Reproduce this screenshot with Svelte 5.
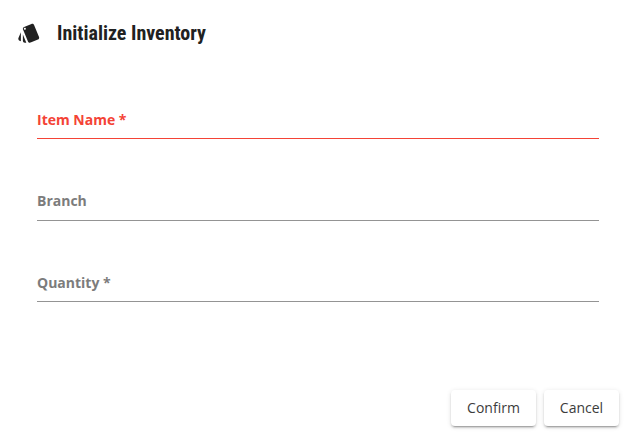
<script>
  const fields = [
    { id: 'item', label: 'Item Name *', invalid: true },
    { id: 'branch', label: 'Branch', invalid: false },
    { id: 'quantity', label: 'Quantity *', invalid: false }
  ];
</script>

<main class="dialog">
  <header>
    <svg class="icon" viewBox="0 0 24 24" aria-hidden="true">
      <path d="M2.53 19.65l1.34.56v-9.03l-2.43 5.86c-.41 1.02.08 2.19 1.09 2.61zm19.5-3.7L17.07 3.98c-.31-.75-1.04-1.21-1.81-1.23-.26 0-.53.04-.79.15L7.1 5.95c-.75.31-1.21 1.03-1.23 1.8-.01.27.04.54.15.8l4.96 11.97c.31.76 1.05 1.22 1.83 1.23.26 0 .52-.05.77-.15l7.36-3.05c1.02-.42 1.51-1.59 1.09-2.6zM7.88 8.75c-.55 0-1-.45-1-1s.45-1 1-1 1 .45 1 1-.45 1-1 1zm-2 11c0 1.1.9 2 2 2h1.45l-3.45-8.34v6.34z" />
    </svg>
    <h1>Initialize Inventory</h1>
  </header>
  <form>
    {#each fields as field (field.id)}
      <div class="field" class:invalid={field.invalid}>
        <span>{field.label}</span>
      </div>
    {/each}
  </form>
  <footer>
    <button class="confirm" type="button">Confirm</button>
    <button class="cancel" type="button">Cancel</button>
  </footer>
</main>

<style>
  :global(body) { background: #fff; }
  .dialog {
    box-sizing: border-box;
    height: 433px;
    padding: 20px 17px 7px;
    display: flex;
    flex-direction: column;
    overflow: hidden;
  }
  header {
    display: flex;
    align-items: center;
    height: 26px;
    color: #212121;
  }
  .icon { width: 24px; height: 24px; fill: currentColor; }
  h1 {
    margin: 0 0 0 16px;
    font: 700 20px/26px "Roboto Condensed", Roboto, sans-serif;
    font-stretch: 75%;
    white-space: nowrap;
  }
  form {
    display: flex;
    flex-direction: column;
    padding: 61px 20px 0;
  }
  .field {
    box-sizing: border-box;
    height: 32px;
    padding-top: 0.5px;
    margin-bottom: 49.5px;
    border-bottom: 1px solid #949494;
    color: #7c7c7c;
    font: 700 14px/24px "Open Sans", sans-serif;
  }
  .invalid { color: #f44336; border-color: #f44336; }
  footer {
    display: flex;
    justify-content: flex-end;
    gap: 8px;
    margin-top: auto;
  }
  button {
    height: 36px;
    padding: 0;
    border: 0;
    border-radius: 4px;
    background: #fff;
    color: #3c3c3c;
    font: 400 14px/36px "Open Sans", sans-serif;
    box-shadow: 0 3px 1px -2px rgba(0,0,0,.2), 0 2px 2px rgba(0,0,0,.14), 0 1px 5px rgba(0,0,0,.12);
  }
  .confirm { width: 85px; }
  .cancel { width: 75px; }
</style>
